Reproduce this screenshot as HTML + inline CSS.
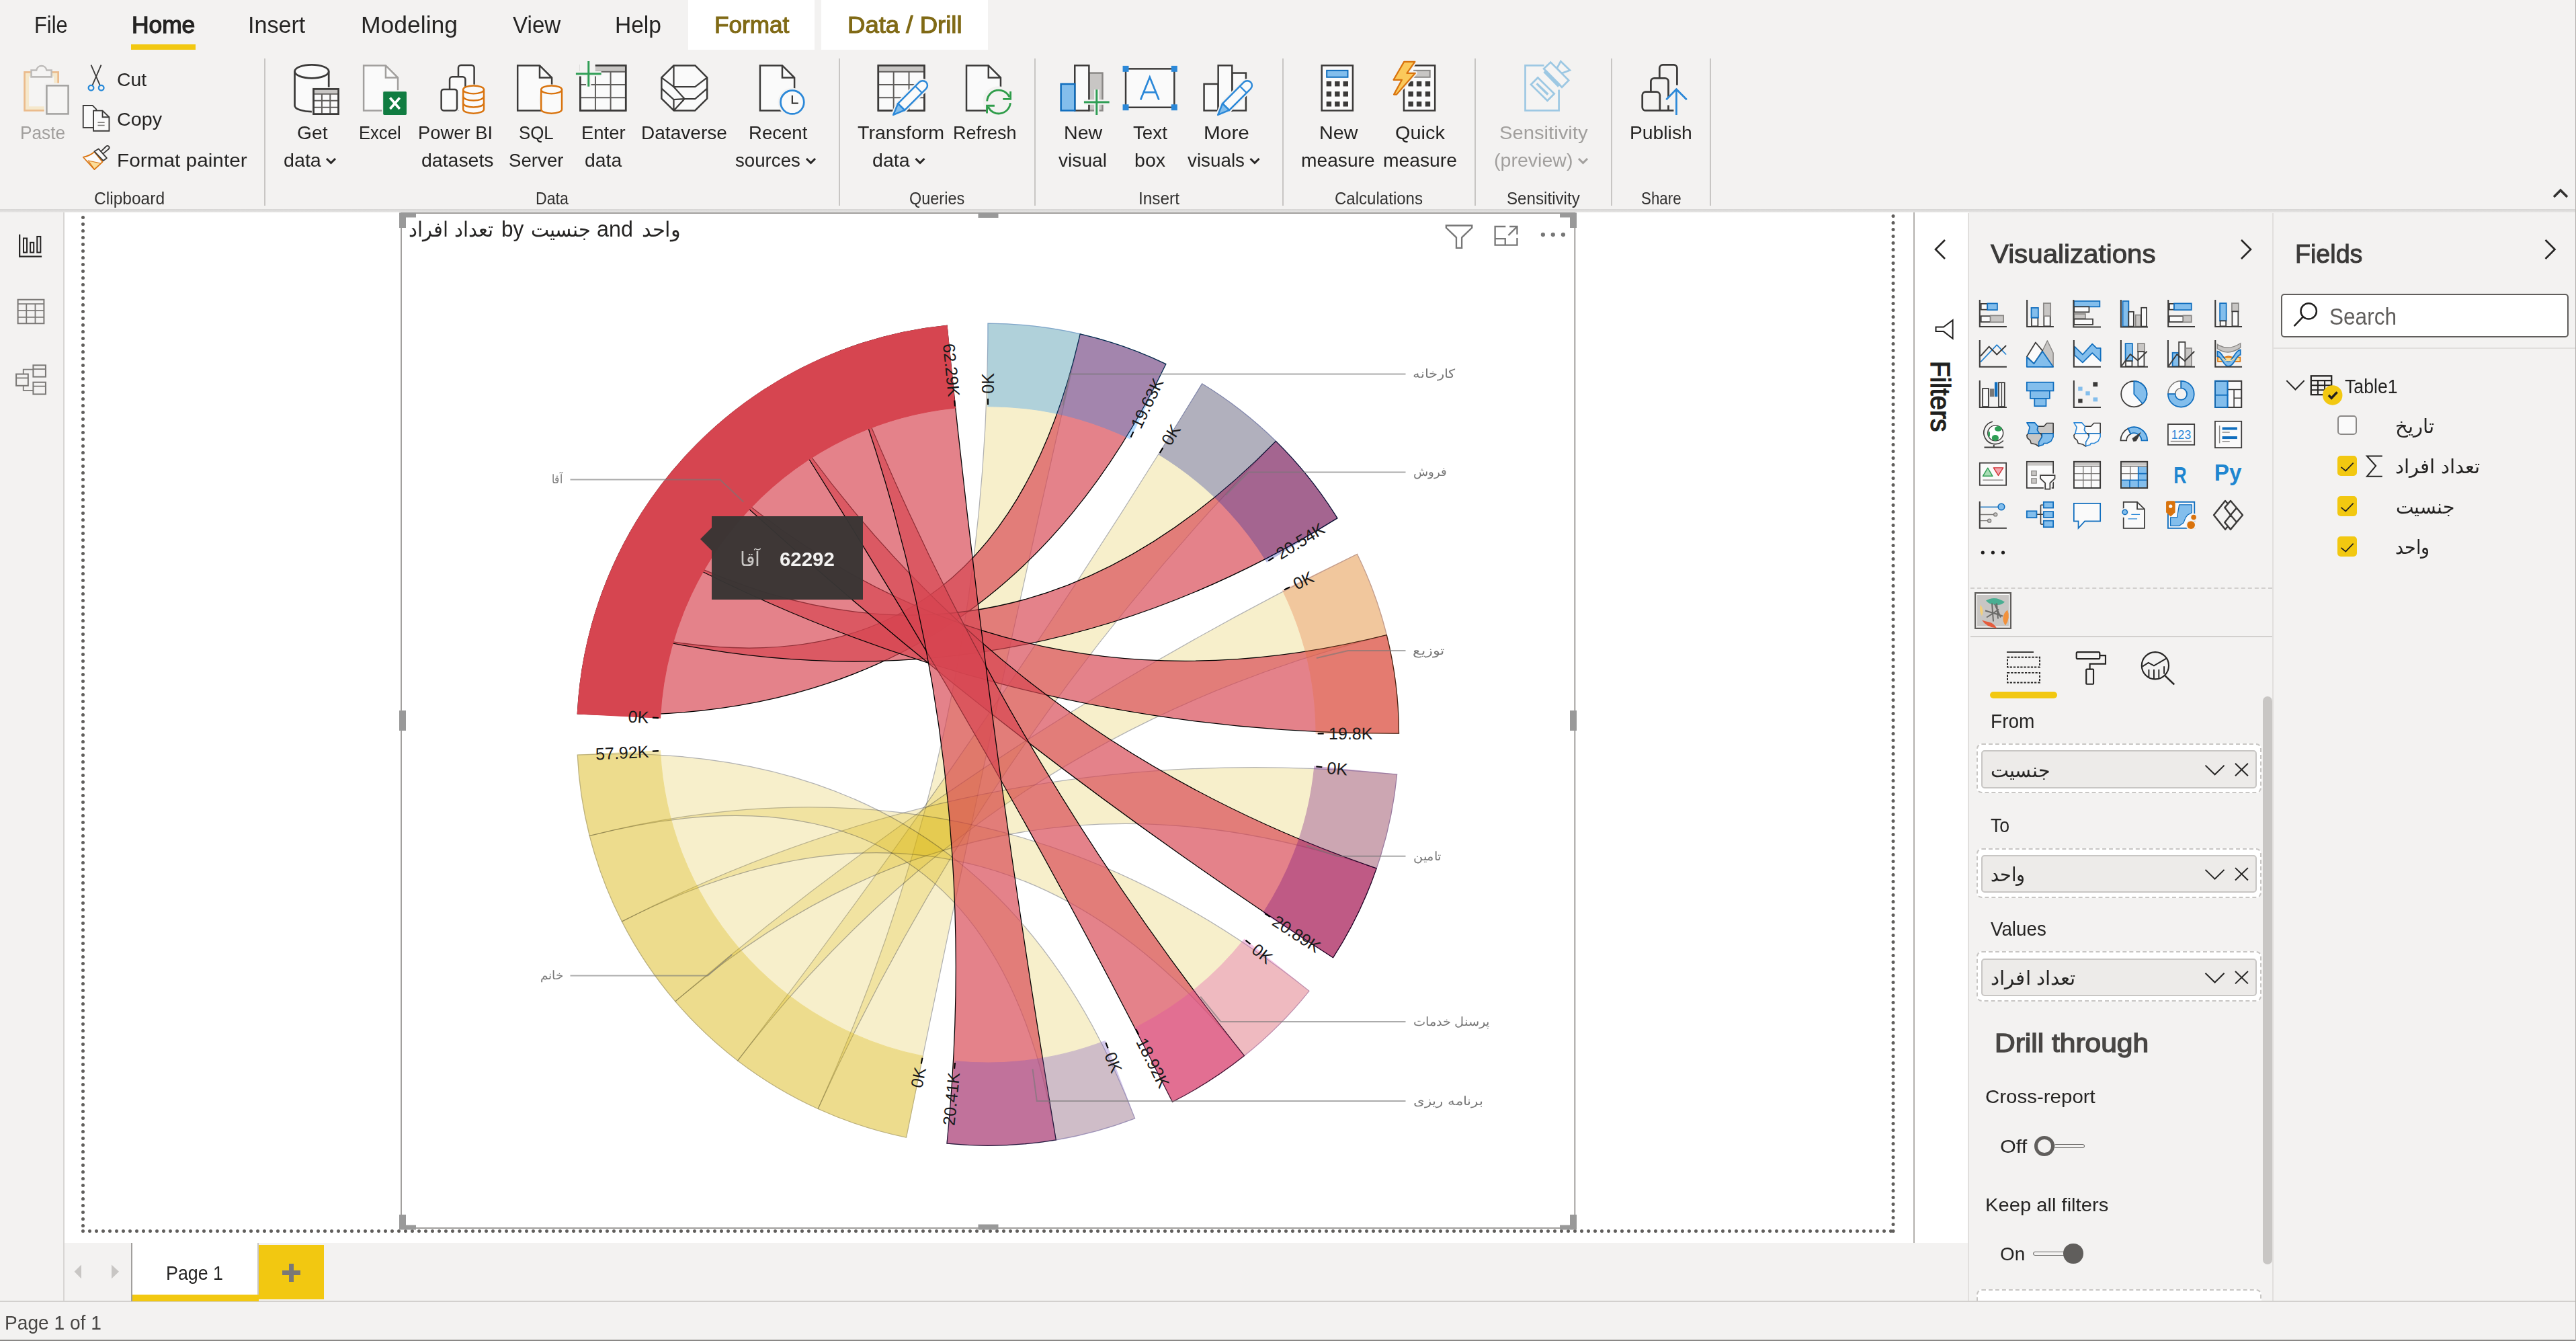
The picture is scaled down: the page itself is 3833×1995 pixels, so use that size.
<!DOCTYPE html>
<html><head><meta charset="utf-8"><title>Power BI</title><style>
html,body{margin:0;padding:0;}
body{width:3833px;height:1995px;overflow:hidden;background:#F3F2F1;font-family:"Liberation Sans",sans-serif;position:relative;}
.b{position:absolute;}
.t{position:absolute;white-space:nowrap;transform-origin:0 0;}
svg.main{position:absolute;left:0;top:0;}
.ch text{font-family:"Liberation Sans",sans-serif;font-size:25px;fill:#1a1a1a;}
.ch text.sl{font-size:20px;fill:#777;}
</style></head><body>
<div class="b" style="left:96.0px;top:311.0px;width:2751.0px;height:1538.0px;background:#fff;"></div>
<div class="b" style="left:2849.0px;top:311.0px;width:80.0px;height:1538.0px;background:#fff;"></div>
<div class="b" style="left:94.0px;top:316.0px;width:2.0px;height:1620.0px;background:#D8D6D4;"></div>
<div class="b" style="left:2846.5px;top:316.0px;width:2.0px;height:1533.0px;background:#B3B0AD;"></div>
<div class="b" style="left:0.0px;top:310.6px;width:3833.0px;height:5.6px;background:linear-gradient(#D6D5D4,#E3E2E1 85%,rgba(235,235,235,.6));"></div>
<div class="b" style="left:1024.0px;top:0.0px;width:188.0px;height:73.8px;background:#fff;"></div>
<div class="b" style="left:1221.9px;top:0.0px;width:248.1px;height:73.8px;background:#fff;"></div>
<div class="b" style="left:195.0px;top:66.0px;width:96.0px;height:8.0px;background:#F2C811;"></div>
<div class="b" style="left:392.8px;top:86.5px;width:2.0px;height:219.0px;background:#C8C6C4;"></div>
<div class="b" style="left:1248.0px;top:86.5px;width:2.0px;height:219.0px;background:#C8C6C4;"></div>
<div class="b" style="left:1538.9px;top:86.5px;width:2.0px;height:219.0px;background:#C8C6C4;"></div>
<div class="b" style="left:1907.8px;top:86.5px;width:2.0px;height:219.0px;background:#C8C6C4;"></div>
<div class="b" style="left:2193.8px;top:86.5px;width:2.0px;height:219.0px;background:#C8C6C4;"></div>
<div class="b" style="left:2397.0px;top:86.5px;width:2.0px;height:219.0px;background:#C8C6C4;"></div>
<div class="b" style="left:2544.0px;top:86.5px;width:2.0px;height:219.0px;background:#C8C6C4;"></div>
<div class="b" style="left:2928.0px;top:317.0px;width:1.5px;height:1619.0px;background:#E1DFDD;"></div>
<div class="b" style="left:3381.0px;top:317.0px;width:1.5px;height:1619.0px;background:#E1DFDD;"></div>
<div class="b" style="left:0.0px;top:1935.3px;width:3833.0px;height:1.5px;background:#D2D0CE;"></div>
<div class="b" style="left:0.0px;top:1993.0px;width:3833.0px;height:2.0px;background:#8A8886;"></div>
<div class="b" style="left:3831.5px;top:0.0px;width:1.5px;height:1995.0px;background:#B3B0AD;"></div>
<div class="b" style="left:195.0px;top:1849.0px;width:189.6px;height:87.0px;background:#fff;border-left:2px solid #A19F9D;border-right:2px solid #C8C6C4;box-sizing:border-box;"></div>
<div class="b" style="left:196.5px;top:1925.8px;width:188.0px;height:10.0px;background:#F2C811;"></div>
<div class="b" style="left:385.0px;top:1852.0px;width:97.0px;height:81.0px;background:#F2C811;"></div>
<div class="b" style="left:420.0px;top:1889.8px;width:27.0px;height:7.5px;background:#7A7876;"></div>
<div class="b" style="left:429.8px;top:1880.0px;width:7.5px;height:27.0px;background:#7A7876;"></div>
<div class="b" style="left:3393.7px;top:437.3px;width:428.6px;height:64.6px;background:#fff;border:2px solid #605E5C;border-radius:5px;box-sizing:border-box;"></div>
<div class="b" style="left:3382.5px;top:517.0px;width:449.0px;height:2.0px;background:#E1DFDD;"></div>
<div class="b" style="left:2932px;top:873.6px;width:449px;height:0;border-top:2px dashed #D2D0CE;"></div>
<div class="b" style="left:2932.0px;top:945.6px;width:449.0px;height:2.0px;background:#D2D0CE;"></div>
<div class="b" style="left:2961.0px;top:1029.2px;width:100.0px;height:9.8px;background:#F2C811;border-radius:5px;"></div>
<div class="b" style="left:3366.5px;top:1035.7px;width:14.0px;height:845.0px;background:#C8C6C4;border-radius:7px;"></div>
<div class="b" style="left:2941px;top:1106.2px;width:424.4px;height:74.2px;background:#fff;border:2px dashed #C8C6C4;border-radius:8px;box-sizing:border-box;"></div>
<div class="b" style="left:2948px;top:1116.4px;width:409.8px;height:56.2px;background:#EDEBE9;border:2px solid #C8C6C4;border-radius:5px;box-sizing:border-box;"></div>
<div class="b" style="left:2941px;top:1261.5px;width:424.4px;height:74.2px;background:#fff;border:2px dashed #C8C6C4;border-radius:8px;box-sizing:border-box;"></div>
<div class="b" style="left:2948px;top:1271.7px;width:409.8px;height:56.2px;background:#EDEBE9;border:2px solid #C8C6C4;border-radius:5px;box-sizing:border-box;"></div>
<div class="b" style="left:2941px;top:1415.4px;width:424.4px;height:74.2px;background:#fff;border:2px dashed #C8C6C4;border-radius:8px;box-sizing:border-box;"></div>
<div class="b" style="left:2948px;top:1425.6px;width:409.8px;height:56.2px;background:#EDEBE9;border:2px solid #C8C6C4;border-radius:5px;box-sizing:border-box;"></div>
<div class="b" style="left:2941px;top:1918.4px;width:424.4px;height:17px;overflow:hidden;"><div style="width:424.4px;height:60px;background:#fff;border:2px dashed #C8C6C4;border-radius:8px;box-sizing:border-box;"></div></div>
<div class="b" style="left:2938.4px;top:881.0px;width:54.5px;height:54.8px;background:#C8C6C4;border:2.5px solid #605E5C;box-sizing:border-box;outline:1px solid #fff;outline-offset:-4px;"></div>
<div class="b" style="left:3478.4px;top:618.4px;width:29.1px;height:29.1px;background:#FAFAFA;border:2px solid #8A8886;border-radius:5px;box-sizing:border-box;"></div>
<div class="b" style="left:3478.4px;top:678.0px;width:29.1px;height:29.6px;background:#F2C811;border-radius:5px;"></div>
<div class="b" style="left:3478.4px;top:738.0px;width:29.1px;height:29.6px;background:#F2C811;border-radius:5px;"></div>
<div class="b" style="left:3478.4px;top:798.0px;width:29.1px;height:29.6px;background:#F2C811;border-radius:5px;"></div>
<div class="b" style="left:3056.0px;top:1702.3px;width:46.0px;height:5.4px;background:#F3F2F1;border:1.5px solid #605E5C;border-radius:3px;box-sizing:border-box;"></div>
<div class="b" style="left:3027px;top:1690.2px;width:29.6px;height:29.6px;border:5px solid #605E5C;border-radius:50%;box-sizing:border-box;"></div>
<div class="b" style="left:3025.3px;top:1862.3px;width:50.0px;height:5.4px;background:#F3F2F1;border:1.5px solid #605E5C;border-radius:3px;box-sizing:border-box;"></div>
<div class="b" style="left:3070.3px;top:1850.3px;width:29.4px;height:29.4px;background:#605E5C;border-radius:50%;"></div>
<svg class="main" width="3833" height="1995" viewBox="0 0 3833 1995">
<g fill="none" stroke="#605E5C" stroke-width="5" stroke-linecap="round" stroke-dasharray="0 10">
<path d="M123.5,323.6 V1831.4"/><path d="M123.5,1831.4 H2817"/><path d="M2817,1831.4 V317"/>
</g>
<rect x="597" y="317" width="1746.3" height="1510" fill="none" stroke="#A19F9D" stroke-width="2"/>
<g class="ch">
<path d="M1470.0,481.2 A611.5,611.5 0 0 1 1607.2,496.8 Q1470.0,1092.8 1348.5,1692.1 A611.5,611.5 0 0 1 1217.2,1649.5 Q1470.0,1092.8 1470.0,481.2Z" fill="#D9B300" fill-opacity=".67" stroke="#000" stroke-width="1.25" opacity=".3"/>
<path d="M1607.2,496.8 A611.5,611.5 0 0 1 1734.9,541.6 Q1470.0,1092.8 859.3,1062.0 A611.5,611.5 0 0 1 881.0,928.5 Q1470.0,1092.8 1607.2,496.8Z" fill="#D64550" fill-opacity=".67" stroke="#000" stroke-width="1.25"/>
<path d="M1788.6,570.8 A611.5,611.5 0 0 1 1898.4,656.4 Q1470.0,1092.8 1217.2,1649.5 A611.5,611.5 0 0 1 1097.7,1577.9 Q1470.0,1092.8 1788.6,570.8Z" fill="#D9B300" fill-opacity=".67" stroke="#000" stroke-width="1.25" opacity=".3"/>
<path d="M1898.4,656.4 A611.5,611.5 0 0 1 1989.9,770.9 Q1470.0,1092.8 881.0,928.5 A611.5,611.5 0 0 1 937.0,793.1 Q1470.0,1092.8 1898.4,656.4Z" fill="#D64550" fill-opacity=".67" stroke="#000" stroke-width="1.25"/>
<path d="M2019.5,824.4 A611.5,611.5 0 0 1 2063.3,944.6 Q1470.0,1092.8 1097.7,1577.9 A611.5,611.5 0 0 1 1004.9,1489.8 Q1470.0,1092.8 2019.5,824.4Z" fill="#D9B300" fill-opacity=".67" stroke="#000" stroke-width="1.25" opacity=".3"/>
<path d="M2063.3,944.6 A611.5,611.5 0 0 1 2081.5,1091.1 Q1470.0,1092.8 937.0,793.1 A611.5,611.5 0 0 1 1024.3,674.1 Q1470.0,1092.8 2063.3,944.6Z" fill="#D64550" fill-opacity=".67" stroke="#000" stroke-width="1.25"/>
<path d="M2078.6,1152.1 A611.5,611.5 0 0 1 2048.2,1291.9 Q1470.0,1092.8 1004.9,1489.8 A611.5,611.5 0 0 1 925.4,1370.9 Q1470.0,1092.8 2078.6,1152.1Z" fill="#D9B300" fill-opacity=".67" stroke="#000" stroke-width="1.25" opacity=".3"/>
<path d="M2048.2,1291.9 A611.5,611.5 0 0 1 1983.6,1424.7 Q1470.0,1092.8 1024.3,674.1 A611.5,611.5 0 0 1 1137.6,579.5 Q1470.0,1092.8 2048.2,1291.9Z" fill="#D64550" fill-opacity=".67" stroke="#000" stroke-width="1.25"/>
<path d="M1947.9,1474.3 A611.5,611.5 0 0 1 1851.5,1570.6 Q1470.0,1092.8 925.4,1370.9 A611.5,611.5 0 0 1 877.3,1243.4 Q1470.0,1092.8 1947.9,1474.3Z" fill="#D9B300" fill-opacity=".67" stroke="#000" stroke-width="1.25" opacity=".3"/>
<path d="M1851.5,1570.6 A611.5,611.5 0 0 1 1744.5,1639.2 Q1470.0,1092.8 1137.6,579.5 A611.5,611.5 0 0 1 1250.9,521.8 Q1470.0,1092.8 1851.5,1570.6Z" fill="#D64550" fill-opacity=".67" stroke="#000" stroke-width="1.25"/>
<path d="M1688.6,1663.9 A611.5,611.5 0 0 1 1571.3,1695.8 Q1470.0,1092.8 877.3,1243.4 A611.5,611.5 0 0 1 859.3,1123.1 Q1470.0,1092.8 1688.6,1663.9Z" fill="#D9B300" fill-opacity=".67" stroke="#000" stroke-width="1.25" opacity=".3"/>
<path d="M1571.3,1695.8 A611.5,611.5 0 0 1 1409.0,1701.2 Q1470.0,1092.8 1250.9,521.8 A611.5,611.5 0 0 1 1409.0,484.3 Q1470.0,1092.8 1571.3,1695.8Z" fill="#D64550" fill-opacity=".67" stroke="#000" stroke-width="1.25"/>
<path d="M1470.0,481.2 A611.5,611.5 0 0 1 1734.9,541.6 L1681.5,652.7 A488.2,488.2 0 0 0 1470.0,604.5Z" fill="#118DFF" stroke="#118DFF" stroke-width="1.25" opacity=".3"/>
<path d="M1788.6,570.8 A611.5,611.5 0 0 1 1989.9,770.9 L1885.1,835.8 A488.2,488.2 0 0 0 1724.3,676.0Z" fill="#12239E" stroke="#12239E" stroke-width="1.25" opacity=".3"/>
<path d="M2019.5,824.4 A611.5,611.5 0 0 1 2081.5,1091.1 L1958.2,1091.4 A488.2,488.2 0 0 0 1908.7,878.5Z" fill="#E66C37" stroke="#E66C37" stroke-width="1.25" opacity=".3"/>
<path d="M2078.6,1152.1 A611.5,611.5 0 0 1 1983.6,1424.7 L1880.0,1357.7 A488.2,488.2 0 0 0 1955.9,1140.2Z" fill="#6B007B" stroke="#6B007B" stroke-width="1.25" opacity=".3"/>
<path d="M1947.9,1474.3 A611.5,611.5 0 0 1 1744.5,1639.2 L1689.1,1529.0 A488.2,488.2 0 0 0 1851.5,1397.3Z" fill="#E044A7" stroke="#E044A7" stroke-width="1.25" opacity=".3"/>
<path d="M1688.6,1663.9 A611.5,611.5 0 0 1 1409.0,1701.2 L1421.3,1578.5 A488.2,488.2 0 0 0 1644.5,1548.7Z" fill="#744EC2" stroke="#744EC2" stroke-width="1.25" opacity=".3"/>
<path d="M1348.5,1692.1 A611.5,611.5 0 0 1 859.3,1123.1 L982.4,1117.0 A488.2,488.2 0 0 0 1373.0,1571.2Z" fill="#D9B300" stroke="#D9B300" stroke-width="1.25" opacity=".3"/>
<path d="M859.3,1062.0 A611.5,611.5 0 0 1 1409.0,484.3 L1421.3,607.0 A488.2,488.2 0 0 0 982.4,1068.2Z" fill="#D64550" stroke="#D64550" stroke-width="1.25"/>
<g transform="translate(1470.0,1092.75) rotate(-90.00) translate(488.2,0)">
<line x1="2.5" x2="11.5" stroke="#000" stroke-width="2.1"/>
<text x="18.9" dy=".35em">0K</text>
</g>
<g transform="translate(1470.0,1092.75) rotate(-64.33) translate(488.2,0)">
<line x1="2.5" x2="11.5" stroke="#000" stroke-width="2.1"/>
<text x="18.9" dy=".35em">19.63K</text>
</g>
<g transform="translate(1470.0,1092.75) rotate(-58.60) translate(488.2,0)">
<line x1="2.5" x2="11.5" stroke="#000" stroke-width="2.1"/>
<text x="18.9" dy=".35em">0K</text>
</g>
<g transform="translate(1470.0,1092.75) rotate(-31.76) translate(488.2,0)">
<line x1="2.5" x2="11.5" stroke="#000" stroke-width="2.1"/>
<text x="18.9" dy=".35em">20.54K</text>
</g>
<g transform="translate(1470.0,1092.75) rotate(-26.03) translate(488.2,0)">
<line x1="2.5" x2="11.5" stroke="#000" stroke-width="2.1"/>
<text x="18.9" dy=".35em">0K</text>
</g>
<g transform="translate(1470.0,1092.75) rotate(-0.16) translate(488.2,0)">
<line x1="2.5" x2="11.5" stroke="#000" stroke-width="2.1"/>
<text x="18.9" dy=".35em">19.8K</text>
</g>
<g transform="translate(1470.0,1092.75) rotate(5.57) translate(488.2,0)">
<line x1="2.5" x2="11.5" stroke="#000" stroke-width="2.1"/>
<text x="18.9" dy=".35em">0K</text>
</g>
<g transform="translate(1470.0,1092.75) rotate(32.87) translate(488.2,0)">
<line x1="2.5" x2="11.5" stroke="#000" stroke-width="2.1"/>
<text x="18.9" dy=".35em">20.89K</text>
</g>
<g transform="translate(1470.0,1092.75) rotate(38.60) translate(488.2,0)">
<line x1="2.5" x2="11.5" stroke="#000" stroke-width="2.1"/>
<text x="18.9" dy=".35em">0K</text>
</g>
<g transform="translate(1470.0,1092.75) rotate(63.33) translate(488.2,0)">
<line x1="2.5" x2="11.5" stroke="#000" stroke-width="2.1"/>
<text x="18.9" dy=".35em">18.92K</text>
</g>
<g transform="translate(1470.0,1092.75) rotate(69.06) translate(488.2,0)">
<line x1="2.5" x2="11.5" stroke="#000" stroke-width="2.1"/>
<text x="18.9" dy=".35em">0K</text>
</g>
<g transform="translate(1470.0,1092.75) rotate(95.73) translate(488.2,0)">
<line x1="2.5" x2="11.5" stroke="#000" stroke-width="2.1"/>
<text transform="rotate(180) translate(-34.2,0)" x="17.1" dy=".35em" text-anchor="end">20.41K</text>
</g>
<g transform="translate(1470.0,1092.75) rotate(101.46) translate(488.2,0)">
<line x1="2.5" x2="11.5" stroke="#000" stroke-width="2.1"/>
<text transform="rotate(180) translate(-34.2,0)" x="17.1" dy=".35em" text-anchor="end">0K</text>
</g>
<g transform="translate(1470.0,1092.75) rotate(177.15) translate(488.2,0)">
<line x1="2.5" x2="11.5" stroke="#000" stroke-width="2.1"/>
<text transform="rotate(180) translate(-34.2,0)" x="17.1" dy=".35em" text-anchor="end">57.92K</text>
</g>
<g transform="translate(1470.0,1092.75) rotate(182.88) translate(488.2,0)">
<line x1="2.5" x2="11.5" stroke="#000" stroke-width="2.1"/>
<text transform="rotate(180) translate(-34.2,0)" x="17.1" dy=".35em" text-anchor="end">0K</text>
</g>
<g transform="translate(1470.0,1092.75) rotate(264.27) translate(488.2,0)">
<line x1="2.5" x2="11.5" stroke="#000" stroke-width="2.1"/>
<text transform="rotate(180) translate(-34.2,0)" x="17.1" dy=".35em" text-anchor="end">62.29K</text>
</g>
<polyline points="1581.5,603.3 1592.2,556.5 2091.5,556.5" fill="none" stroke="#777" stroke-opacity=".62" stroke-width="2"/>
<polyline points="1823.8,736.7 1857.7,702.6 2091.5,702.6" fill="none" stroke="#777" stroke-opacity=".62" stroke-width="2"/>
<polyline points="1958.9,979.0 2005.7,968.1 2091.5,968.1" fill="none" stroke="#777" stroke-opacity=".62" stroke-width="2"/>
<polyline points="1944.0,1258.0 1989.3,1273.8 2091.5,1273.8" fill="none" stroke="#777" stroke-opacity=".62" stroke-width="2"/>
<polyline points="1786.2,1482.7 1816.4,1520.0 2091.5,1520.0" fill="none" stroke="#777" stroke-opacity=".62" stroke-width="2"/>
<polyline points="1536.5,1590.3 1542.8,1637.9 2091.5,1637.9" fill="none" stroke="#777" stroke-opacity=".62" stroke-width="2"/>
<polyline points="1089.4,1420.1 1053.0,1451.4 848.5,1451.4" fill="none" stroke="#777" stroke-opacity=".62" stroke-width="2"/>
<polyline points="1106.3,746.7 1071.5,713.6 848.5,713.6" fill="none" stroke="#777" stroke-opacity=".62" stroke-width="2"/>
</g>
<g fill="#999">
<path d="M594,316.5 h25 v7 h-15 v15.5 h-10z"/>
<path d="M2346,316.5 h-25 v7 h15 v15.5 h10z"/>
<path d="M594,1829.5 h25 v-7 h-15 v-15.5 h-10z"/>
<path d="M2346,1829.5 h-25 v-7 h15 v-15.5 h10z"/>
<rect x="1455.5" y="316.5" width="30" height="7.5"/><rect x="1455.5" y="1821.5" width="30" height="8"/>
<rect x="594" y="1057" width="10" height="30"/><rect x="2336" y="1057" width="10" height="30"/>
</g>
<g transform="translate(0,0) scale(0.248447)"><path d="M1765,428 V632 A102,36 0 0 0 1969,632 V428Z" fill="#FAFAFA"/><ellipse cx="1867" cy="428" rx="102" ry="40" fill="#FAFAFA" stroke="#3B3A39" stroke-width="11"/><path d="M1765,428 V632 A102,36 0 0 0 1880,668" fill="none" stroke="#3B3A39" stroke-width="11"/><path d="M1969,428 V530" fill="none" stroke="#3B3A39" stroke-width="11"/><rect x="1867" y="522" width="171" height="172" fill="#F3F2F1"/><rect x="1878" y="533" width="149" height="150" fill="#FAFAFA" stroke="#3B3A39" stroke-width="10"/><rect x="1883" y="538" width="139" height="25" fill="#C8C6C4"/><path d="M1927.67,563 V683 M1977.33,563 V683 M1878,563 H2027 M1878,603 H2027 M1878,643 H2027 " fill="none" stroke="#605E5C" stroke-width="8"/><rect x="1878" y="533" width="149" height="150" fill="none" stroke="#3B3A39" stroke-width="10"/><path d="M2178,392 H2310 L2383,465 V662 H2178Z" fill="#FAFAFA" stroke="#A19F9D" stroke-width="10"/><path d="M2310,392 V465 H2383" fill="none" stroke="#A19F9D" stroke-width="10"/><rect x="2287" y="540" width="156" height="156" fill="#F3F2F1"/><rect x="2295" y="548" width="140" height="140" fill="#107C41" rx="6"/><path d="M2336,586 L2394,652 M2394,586 L2336,652" fill="none" stroke="#fff" stroke-width="15"/></g><g transform="translate(600,0) scale(0.248447)"><path d="M330,662 V406 a16,16 0 0 1 16,-16 H409 a16,16 0 0 1 16,16 V662" fill="#FAFAFA" stroke="#3B3A39" stroke-width="10"/><path d="M278,662 V476 a16,16 0 0 1 16,-16 H356 a16,16 0 0 1 16,16 V662" fill="#FAFAFA" stroke="#3B3A39" stroke-width="10"/><rect x="228" y="535" width="94" height="127" fill="#FAFAFA" stroke="#3B3A39" stroke-width="10" rx="14"/><ellipse cx="421" cy="600" rx="76" ry="95" fill="#F3F2F1"/><path d="M359,537 V655 A62,24 0 0 0 483,655 V537Z" fill="#FAFAFA" stroke="#D9730D" stroke-width="10"/><ellipse cx="421" cy="537" rx="62" ry="24" fill="#FAFAFA" stroke="#D9730D" stroke-width="10"/><path d="M359,578 A62,24 0 0 0 483,578" fill="none" stroke="#D9730D" stroke-width="10"/><path d="M359,618 A62,24 0 0 0 483,618" fill="none" stroke="#D9730D" stroke-width="10"/><path d="M685,392 H817 L890,465 V662 H685Z" fill="#FAFAFA" stroke="#3B3A39" stroke-width="10"/><path d="M817,392 V465 H890" fill="none" stroke="#3B3A39" stroke-width="10"/><ellipse cx="888" cy="600" rx="76" ry="95" fill="#F3F2F1"/><path d="M826,537 V655 A62,24 0 0 0 950,655 V537Z" fill="#FAFAFA" stroke="#D9730D" stroke-width="10"/><ellipse cx="888" cy="537" rx="62" ry="24" fill="#FAFAFA" stroke="#D9730D" stroke-width="10"/><rect x="1060" y="392" width="273" height="270" fill="#FAFAFA" stroke="#3B3A39" stroke-width="10"/><rect x="1065" y="397" width="263" height="33" fill="#C8C6C4"/><path d="M1151,430 V662 M1242,430 V662 M1060,430 H1333 M1060,507.333 H1333 M1060,584.667 H1333 " fill="none" stroke="#605E5C" stroke-width="8"/><rect x="1060" y="392" width="273" height="270" fill="none" stroke="#3B3A39" stroke-width="10"/><rect x="1055" y="385" width="95" height="47" fill="#F3F2F1"/><path d="M1034,442 H1186 M1110,366 V518" fill="none" stroke="#F3F2F1" stroke-width="30"/><path d="M1034,442 H1186 M1110,366 V518" fill="none" stroke="#2F9E55" stroke-width="12"/><path d="M1620,392 H1748 L1820,464 V590 L1748,662 H1620 L1547,590 V464Z" fill="#FAFAFA" stroke="#3B3A39" stroke-width="10" stroke-linejoin="round"/><path d="M1620,392 V520 H1748 L1820,464 M1547,464 L1620,520 M1620,520 L1685,592 H1748 L1820,530 M1547,530 L1620,596 L1685,592 M1620,596 V662 M1685,592 L1620,662" fill="none" stroke="#3B3A39" stroke-width="9"/><path d="M2137,392 H2270 L2343,465 V662 H2137Z" fill="#FAFAFA" stroke="#3B3A39" stroke-width="10"/><path d="M2270,392 V465 H2343" fill="none" stroke="#3B3A39" stroke-width="10"/><circle cx="2330" cy="612" r="86" fill="#F3F2F1"/><circle cx="2330" cy="612" r="70" fill="#FAFAFA" stroke="#2B88D8" stroke-width="11"/><path d="M2330,572 V618 H2366" fill="none" stroke="#3B3A39" stroke-width="9"/></g><g transform="translate(1200,0) scale(0.248447)"><rect x="430" y="392" width="276" height="270" fill="#FAFAFA" stroke="#3B3A39" stroke-width="10"/><rect x="435" y="397" width="266" height="33" fill="#C8C6C4"/><path d="M522,430 V662 M614,430 V662 M430,430 H706 M430,507.333 H706 M430,584.667 H706 " fill="none" stroke="#605E5C" stroke-width="8"/><rect x="430" y="392" width="276" height="270" fill="none" stroke="#3B3A39" stroke-width="10"/><g transform="translate(0,0)"><path d="M520,688 L548,620 L676,492 A28,28 0 0 1 716,532 L588,660 Z" fill="#F3F2F1" stroke="#F3F2F1" stroke-width="26" stroke-linejoin="round"/><path d="M548,620 L676,492 A28,28 0 0 1 716,532 L588,660 Z" fill="#FAFAFA" stroke="#2B88D8" stroke-width="10"/><path d="M548,620 L588,660 L520,688 Z" fill="#83BEEC" stroke="#2B88D8" stroke-width="10" stroke-linejoin="round"/><path d="M652,516 L692,556" fill="none" stroke="#2B88D8" stroke-width="9"/></g><path d="M958,392 H1090 L1163,465 V662 H958Z" fill="#FAFAFA" stroke="#3B3A39" stroke-width="10"/><path d="M1090,392 V465 H1163" fill="none" stroke="#3B3A39" stroke-width="10"/><circle cx="1147" cy="606" r="90" fill="#F3F2F1"/><rect x="1692" y="437" width="81" height="225" fill="#C8C6C4" stroke="#8A8886" stroke-width="10"/><rect x="1607" y="392" width="85" height="270" fill="#FAFAFA" stroke="#3B3A39" stroke-width="10"/><rect x="1524" y="503" width="83" height="159" fill="#83BEEC" stroke="#106EBE" stroke-width="10"/><path d="M1662,612 H1814 M1738,536 V688" fill="none" stroke="#F3F2F1" stroke-width="30"/><path d="M1662,612 H1814 M1738,536 V688" fill="none" stroke="#2F9E55" stroke-width="12"/><rect x="1912" y="412" width="291" height="231" fill="#FAFAFA" stroke="#3B3A39" stroke-width="10"/><rect x="1894" y="394" width="36" height="36" fill="#2B88D8"/><rect x="2185" y="394" width="36" height="36" fill="#2B88D8"/><rect x="1894" y="625" width="36" height="36" fill="#2B88D8"/><rect x="2185" y="625" width="36" height="36" fill="#2B88D8"/><path d="M2001,598 L2056,462 L2111,598 M2019,553 H2093" fill="none" stroke="#2B88D8" stroke-width="11"/></g><g transform="translate(1760,0) scale(0.248447)"><rect x="295" y="437" width="83" height="225" fill="#FAFAFA" stroke="#3B3A39" stroke-width="10"/><rect x="127" y="503" width="85" height="159" fill="#FAFAFA" stroke="#3B3A39" stroke-width="10"/><rect x="212" y="392" width="83" height="270" fill="#FAFAFA" stroke="#3B3A39" stroke-width="10"/><g transform="translate(-310,0)"><path d="M520,688 L548,620 L676,492 A28,28 0 0 1 716,532 L588,660 Z" fill="#F3F2F1" stroke="#F3F2F1" stroke-width="26" stroke-linejoin="round"/><path d="M548,620 L676,492 A28,28 0 0 1 716,532 L588,660 Z" fill="#FAFAFA" stroke="#2B88D8" stroke-width="10"/><path d="M548,620 L588,660 L520,688 Z" fill="#83BEEC" stroke="#2B88D8" stroke-width="10" stroke-linejoin="round"/><path d="M652,516 L692,556" fill="none" stroke="#2B88D8" stroke-width="9"/></g><rect x="832" y="392" width="186" height="270" fill="#FAFAFA" stroke="#3B3A39" stroke-width="10"/><rect x="862" y="422" width="126" height="40" fill="#83BEEC" stroke="#106EBE" stroke-width="8"/><rect x="860" y="487" width="30" height="30" fill="#3B3A39"/><rect x="860" y="548" width="30" height="30" fill="#3B3A39"/><rect x="860" y="608" width="30" height="30" fill="#3B3A39"/><rect x="910" y="487" width="30" height="30" fill="#3B3A39"/><rect x="910" y="548" width="30" height="30" fill="#3B3A39"/><rect x="910" y="608" width="30" height="30" fill="#3B3A39"/><rect x="960" y="487" width="30" height="30" fill="#3B3A39"/><rect x="960" y="548" width="30" height="30" fill="#3B3A39"/><rect x="960" y="608" width="30" height="30" fill="#3B3A39"/><rect x="1324" y="392" width="186" height="270" fill="#FAFAFA" stroke="#3B3A39" stroke-width="10"/><rect x="1385" y="422" width="95" height="40" fill="#C8C6C4" stroke="#8A8886" stroke-width="8"/><rect x="1350" y="487" width="30" height="30" fill="#3B3A39"/><rect x="1350" y="548" width="30" height="30" fill="#3B3A39"/><rect x="1350" y="608" width="30" height="30" fill="#3B3A39"/><rect x="1400" y="487" width="30" height="30" fill="#3B3A39"/><rect x="1400" y="548" width="30" height="30" fill="#3B3A39"/><rect x="1400" y="608" width="30" height="30" fill="#3B3A39"/><rect x="1452" y="487" width="30" height="30" fill="#3B3A39"/><rect x="1452" y="548" width="30" height="30" fill="#3B3A39"/><rect x="1452" y="608" width="30" height="30" fill="#3B3A39"/><path d="M1325,370 H1390 L1342,438 H1392 L1280,566 H1264 L1312,478 H1262Z" fill="#F3F2F1" stroke="#F3F2F1" stroke-width="24" stroke-linejoin="round"/><path d="M1325,370 H1390 L1342,438 H1392 L1280,566 H1264 L1312,478 H1262Z" fill="#FBC95B" stroke="#D9730D" stroke-width="9" stroke-linejoin="round"/></g><g transform="translate(2360,0) scale(0.248447)"><path d="M440,468 V408 a20,20 0 0 1 20,-20 h65 a20,20 0 0 1 20,20 V510" fill="none" stroke="#3B3A39" stroke-width="11"/><path d="M388,550 V488 a20,20 0 0 1 20,-20 h65 a20,20 0 0 1 20,20 V585 M493,630 V662" fill="none" stroke="#3B3A39" stroke-width="11"/><path d="M442,662 V570 a20,20 0 0 0 -20,-20 h-65 a20,20 0 0 0 -20,20 v72 a20,20 0 0 0 20,20 H525" fill="none" stroke="#3B3A39" stroke-width="11"/><path d="M541,688 V534 M480,597 L541,534 L603,597" fill="none" stroke="#2B88D8" stroke-width="11"/></g><g transform="translate(1425,85) scale(0.0708215)"><path d="M617,925 A245,245 0 0 1 1085,838" fill="none" stroke="#2E9C49" stroke-width="40"/><path d="M1110,720 V880 H950" fill="none" stroke="#2E9C49" stroke-width="40"/><path d="M1107,962 A245,245 0 0 1 640,1042" fill="none" stroke="#2E9C49" stroke-width="40"/><path d="M775,1020 H615 V1180" fill="none" stroke="#2E9C49" stroke-width="40"/></g><g transform="translate(2255,85) scale(0.0708215)"><path d="M600,175 H205 V1122 H912 V685" fill="#F5F4F3" stroke="#9DC8E3" stroke-width="38"/><path d="M470,430 L815,770 L670,915 L325,575Z" fill="#F5F4F3" stroke="#9DC8E3" stroke-width="38"/><path d="M460,535 L700,765 L665,805 L430,572Z" fill="#9DC8E3"/><path d="M738,108 L1118,488 L975,632 L595,245Z" fill="#F3F2F1" stroke="#F3F2F1" stroke-width="70" stroke-linejoin="round"/><path d="M870,235 L950,88 L1143,275 L968,340Z" fill="#F5F4F3" stroke="#9DC8E3" stroke-width="38"/><path d="M738,108 L1118,488 L975,632 L595,245Z" fill="#F5F4F3" stroke="#9DC8E3" stroke-width="38"/><path d="M585,320 L640,262 L948,572 L890,632Z" fill="#9DC8E3"/></g><g transform="translate(20,85) scale(0.0708215)"><rect x="215" y="297" width="745" height="843" fill="#EBBB8C"/><rect x="253" y="335" width="669" height="767" fill="#F5E8CC"/><rect x="325" y="405" width="525" height="630" fill="#F5F4F3"/><path d="M375,415 V275 H482 A110,112 0 0 1 698,275 H800 V415Z" fill="#F5F4F3" stroke="#BDBBB9" stroke-width="36"/><rect x="645" y="545" width="560" height="700" fill="#F3F2F1"/><rect x="698" y="598" width="454" height="594" fill="#F5F4F3" stroke="#A3A2A0" stroke-width="36"/></g><g transform="translate(110,80) scale(0.141723)"><path d="M180,118 L275,335 M286,118 L192,335" fill="none" stroke="#3B3A39" stroke-width="13"/><circle cx="180" cy="358" r="27" fill="none" stroke="#2488D8" stroke-width="16"/><circle cx="287" cy="358" r="27" fill="none" stroke="#2488D8" stroke-width="16"/><path d="M97,543 H195 L235,583 V775 H97Z" fill="#FAFAFA" stroke="#3B3A39" stroke-width="13"/><path d="M205,597 H300 L370,665 V810 H205Z" fill="#FAFAFA" stroke="#3B3A39" stroke-width="13"/><path d="M300,597 V665 H370" fill="none" stroke="#3B3A39" stroke-width="13"/><path d="M250,722 H322 M250,752 H322" fill="none" stroke="#7A7876" stroke-width="11"/><path d="M97,1085 Q160,1075 215,1030 L300,1135 L215,1215Z" fill="#FAFAFA" stroke="#D9730D" stroke-width="12" stroke-linejoin="round"/><path d="M150,1122 L283,1150 L215,1212Z" fill="#FBDD9A" stroke="#D9730D" stroke-width="8" stroke-linejoin="round"/><path d="M215,1025 L258,998 L345,1095 L308,1122Z" fill="#FAFAFA" stroke="#3B3A39" stroke-width="13" stroke-linejoin="round"/><path d="M282,1028 L338,972 Q356,958 368,974 Q378,990 362,1002 L302,1052" fill="none" stroke="#3B3A39" stroke-width="13" stroke-linejoin="round"/></g><path d="M486,236 l6.5,6.5 l6.5,-6.5" fill="none" stroke="#252423" stroke-width="3"/><path d="M1200,236 l6.5,6.5 l6.5,-6.5" fill="none" stroke="#252423" stroke-width="3"/><path d="M1362.5,236 l6.5,6.5 l6.5,-6.5" fill="none" stroke="#252423" stroke-width="3"/><path d="M1860.5,236 l6.5,6.5 l6.5,-6.5" fill="none" stroke="#252423" stroke-width="3"/><path d="M2349,236 l6.5,6.5 l6.5,-6.5" fill="none" stroke="#A19F9D" stroke-width="3"/><path d="M3800,293 L3810,283 L3820,293" fill="none" stroke="#323130" stroke-width="3.5"/><g transform="translate(2945,446) scale(0.15916)"><rect x="17" y="37" width="60" height="55" fill="#FAFAFA" stroke="#3B3A39" stroke-width="11"/><rect x="77" y="34" width="92" height="61" fill="#83BEEC" stroke="#106EBE" stroke-width="11"/><rect x="17" y="152" width="88" height="55" fill="#FAFAFA" stroke="#3B3A39" stroke-width="11"/><rect x="105" y="147" width="122" height="62" fill="#C8C6C4" stroke="#8A8886" stroke-width="11"/><path d="M5,0 V251 H257" fill="none" stroke="#3B3A39" stroke-width="13"/></g><g transform="translate(3015.03,446) scale(0.15916)"><rect x="50" y="167" width="59" height="80" fill="#FAFAFA" stroke="#3B3A39" stroke-width="11"/><rect x="47" y="75" width="65" height="92" fill="#83BEEC" stroke="#106EBE" stroke-width="11"/><rect x="165" y="152" width="59" height="95" fill="#FAFAFA" stroke="#3B3A39" stroke-width="11"/><rect x="162" y="32" width="65" height="120" fill="#C8C6C4" stroke="#8A8886" stroke-width="11"/><path d="M7,0 V251 H257" fill="none" stroke="#3B3A39" stroke-width="13"/></g><g transform="translate(3085.06,446) scale(0.15916)"><rect x="7" y="12" width="240" height="53" fill="#83BEEC" stroke="#106EBE" stroke-width="11"/><rect x="7" y="65" width="140" height="50" fill="#FAFAFA" stroke="#3B3A39" stroke-width="11"/><rect x="7" y="132" width="105" height="45" fill="#C8C6C4" stroke="#8A8886" stroke-width="11"/><rect x="7" y="180" width="175" height="52" fill="#FAFAFA" stroke="#3B3A39" stroke-width="11"/><path d="M2,0 V255 H257" fill="none" stroke="#3B3A39" stroke-width="13"/></g><g transform="translate(3155.09,446) scale(0.15916)"><rect x="22" y="12" width="55" height="237" fill="#83BEEC" stroke="#106EBE" stroke-width="11"/><rect x="77" y="112" width="47" height="137" fill="#FAFAFA" stroke="#3B3A39" stroke-width="11"/><rect x="142" y="142" width="48" height="107" fill="#C8C6C4" stroke="#8A8886" stroke-width="11"/><rect x="195" y="74" width="50" height="175" fill="#FAFAFA" stroke="#3B3A39" stroke-width="11"/><path d="M5,0 V255 H257" fill="none" stroke="#3B3A39" stroke-width="13"/></g><g transform="translate(3225.12,446) scale(0.15916)"><rect x="17" y="37" width="45" height="55" fill="#FAFAFA" stroke="#3B3A39" stroke-width="11"/><rect x="62" y="34" width="162" height="61" fill="#83BEEC" stroke="#106EBE" stroke-width="11"/><rect x="17" y="152" width="130" height="55" fill="#FAFAFA" stroke="#3B3A39" stroke-width="11"/><rect x="147" y="147" width="77" height="62" fill="#C8C6C4" stroke="#8A8886" stroke-width="11"/><path d="M7,0 V251 H257" fill="none" stroke="#3B3A39" stroke-width="13"/></g><g transform="translate(3295.15,446) scale(0.15916)"><rect x="50" y="32" width="60" height="165" fill="#83BEEC" stroke="#106EBE" stroke-width="11"/><rect x="53" y="197" width="54" height="50" fill="#FAFAFA" stroke="#3B3A39" stroke-width="11"/><rect x="162" y="32" width="62" height="77" fill="#C8C6C4" stroke="#8A8886" stroke-width="11"/><rect x="165" y="109" width="56" height="138" fill="#FAFAFA" stroke="#3B3A39" stroke-width="11"/><path d="M7,0 V251 H257" fill="none" stroke="#3B3A39" stroke-width="13"/></g><g transform="translate(2945,506) scale(0.15916)"><path d="M12,205 L165,45 L252,135" fill="none" stroke="#1F7FCF" stroke-width="10" stroke-linejoin="round"/><path d="M12,150 L92,60 L165,135 L252,50" fill="none" stroke="#3B3A39" stroke-width="12" stroke-linejoin="round"/><path d="M5,0 V250 H257" fill="none" stroke="#3B3A39" stroke-width="13"/></g><g transform="translate(3015.03,506) scale(0.15916)"><path d="M152,100 L197,5 L252,120 L252,250 L152,250Z" fill="#C8C6C4" stroke="#8A8886" stroke-width="9" stroke-linejoin="round"/><path d="M5,155 L87,22 L152,100 L72,220Z" fill="#FAFAFA" stroke="#3B3A39" stroke-width="11" stroke-linejoin="round"/><path d="M5,160 L72,220 L152,105 L252,250 L5,250Z" fill="#83BEEC" stroke="#106EBE" stroke-width="11" stroke-linejoin="round"/></g><g transform="translate(3085.06,506) scale(0.15916)"><path d="M12,140 L87,210 L177,120 L255,195 L255,245 L12,245Z" fill="#FAFAFA" stroke-linejoin="round"/><path d="M12,60 L87,135 L177,35 L217,75 L255,75 L255,195 L177,120 L87,210 L12,140Z" fill="#83BEEC" stroke="#106EBE" stroke-width="11" stroke-linejoin="round"/><path d="M5,0 V250 H257" fill="none" stroke="#3B3A39" stroke-width="13"/></g><g transform="translate(3155.09,506) scale(0.15916)"><rect x="47" y="32" width="65" height="163" fill="#83BEEC" stroke="#106EBE" stroke-width="11"/><rect x="50" y="195" width="59" height="50" fill="#FAFAFA" stroke="#3B3A39" stroke-width="11"/><rect x="162" y="32" width="63" height="76" fill="#C8C6C4" stroke="#8A8886" stroke-width="11"/><rect x="165" y="108" width="57" height="137" fill="#FAFAFA" stroke="#3B3A39" stroke-width="11"/><path d="M5,0 V250 H257" fill="none" stroke="#3B3A39" stroke-width="13"/><path d="M12,240 L92,132 L162,190 L249,105" fill="none" stroke="#3B3A39" stroke-width="12" stroke-linejoin="round"/></g><g transform="translate(3225.12,506) scale(0.15916)"><rect x="47" y="118" width="60" height="127" fill="#83BEEC" stroke="#106EBE" stroke-width="11"/><rect x="107" y="18" width="58" height="227" fill="#FAFAFA" stroke="#3B3A39" stroke-width="11"/><rect x="169" y="75" width="56" height="170" fill="#C8C6C4" stroke="#8A8886" stroke-width="11"/><path d="M5,0 V250 H257" fill="none" stroke="#3B3A39" stroke-width="13"/><path d="M12,240 L89,132 L162,195 L252,105" fill="none" stroke="#3B3A39" stroke-width="12" stroke-linejoin="round"/></g><g transform="translate(3295.15,506) scale(0.15916)"><path d="M27,40 Q127,105 242,30 V70 Q127,150 27,80Z" fill="#C8C6C4" stroke="#8A8886" stroke-width="9"/><rect x="30" y="160" width="210" height="40" fill="#FBDD9A" stroke="#D9730D" stroke-width="10"/><path d="M27,105 C70,105 90,200 130,200 C170,200 190,95 242,90 L242,138 C200,140 185,245 130,245 C80,245 70,150 27,152Z" fill="#83BEEC" stroke="#106EBE" stroke-width="11"/><path d="M100,160 Q130,142 160,160" fill="none" stroke="#D9730D" stroke-width="9"/><path d="M75,172 Q130,215 185,172" fill="none" stroke="#FBDD9A" stroke-width="10"/><path d="M7,0 V250 H257" fill="none" stroke="#3B3A39" stroke-width="13"/></g><g transform="translate(2945,566) scale(0.15916)"><rect x="32" y="75" width="55" height="170" fill="#FAFAFA" stroke="#3B3A39" stroke-width="11"/><rect x="100" y="77" width="40" height="75" fill="#7A7876"/><rect x="144" y="15" width="28" height="137" fill="#106EBE"/><rect x="182" y="20" width="55" height="225" fill="#FAFAFA" stroke="#3B3A39" stroke-width="11"/><path d="M210,20 V245" fill="none" stroke="#3B3A39" stroke-width="9"/><path d="M5,0 V251 H257" fill="none" stroke="#3B3A39" stroke-width="13"/></g><g transform="translate(3015.03,566) scale(0.15916)"><rect x="5" y="17" width="249" height="80" fill="#83BEEC" stroke="#106EBE" stroke-width="11"/><rect x="37" y="97" width="182" height="72" fill="#83BEEC" stroke="#106EBE" stroke-width="11"/><rect x="77" y="169" width="108" height="71" fill="#83BEEC" stroke="#106EBE" stroke-width="11"/></g><g transform="translate(3085.06,566) scale(0.15916)"><rect x="184" y="15" width="43" height="42" fill="#3B3A39"/><rect x="45" y="59" width="40" height="38" fill="#83BEEC"/><rect x="115" y="102" width="40" height="38" fill="#83BEEC"/><rect x="185" y="159" width="42" height="38" fill="#83BEEC"/><rect x="45" y="172" width="40" height="38" fill="#3B3A39"/><path d="M5,0 V251 H257" fill="none" stroke="#3B3A39" stroke-width="13"/></g><g transform="translate(3155.09,566) scale(0.15916)"><circle cx="127" cy="127" r="120" fill="#FAFAFA" stroke="#3B3A39" stroke-width="11"/><path d="M127,127 V7 A120,120 0 0 1 207,217Z" fill="#83BEEC" stroke="#106EBE" stroke-width="11" stroke-linejoin="round"/></g><g transform="translate(3225.12,566) scale(0.15916)"><path d="M5,127 A122,122 0 0 1 127,5 V72 A55,55 0 0 0 72,127Z" fill="#FAFAFA" stroke="#7A7876" stroke-width="10"/><path d="M127,5 A122,122 0 1 1 5,127 H72 A55,55 0 1 0 127,72Z" fill="#83BEEC" stroke="#106EBE" stroke-width="11"/></g><g transform="translate(3295.15,566) scale(0.15916)"><rect x="5" y="5" width="247" height="246" fill="#FAFAFA" stroke="#3B3A39" stroke-width="11"/><rect x="5" y="5" width="117" height="132" fill="#83BEEC" stroke="#106EBE" stroke-width="11"/><rect x="5" y="137" width="117" height="114" fill="#83BEEC" stroke="#106EBE" stroke-width="11"/><path d="M122,85 H252 M182,85 V251 M182,165 H252" fill="none" stroke="#3B3A39" stroke-width="10"/><rect x="5" y="5" width="247" height="246" fill="none" stroke="#3B3A39" stroke-width="11"/><rect x="5" y="5" width="117" height="246" fill="none" stroke="#106EBE" stroke-width="11"/></g><g transform="translate(2945,626) scale(0.15916)"><path d="M125,8 A106,106 0 1 0 225,185" fill="none" stroke="#3B3A39" stroke-width="10"/><circle cx="152" cy="115" r="72" fill="#fff" stroke="#3B3A39" stroke-width="9"/><ellipse cx="178" cy="75" rx="34" ry="24" fill="#2F9E55"/><ellipse cx="150" cy="160" rx="32" ry="28" fill="#2F9E55"/><ellipse cx="92" cy="125" rx="9" ry="26" fill="#2F9E55"/><path d="M47,248 H227 M137,225 V248" fill="none" stroke="#3B3A39" stroke-width="12"/></g><g transform="translate(3015.03,626) scale(0.15916)"><path d="M109,52 L165,52 L192,22 L252,22 L252,120 L122,120 L102,85Z" fill="#C8C6C4" stroke="#3B3A39" stroke-width="10" stroke-linejoin="round"/><path d="M5,135 L17,120 L137,120 L147,150 L117,200 L117,240 L87,220 L45,210 L37,185 L9,160Z" fill="#C8C6C4" stroke="#3B3A39" stroke-width="10" stroke-linejoin="round"/><path d="M5,18 L79,18 L109,52 L102,85 L122,120 L17,120 L32,60Z" fill="#83BEEC" stroke="#106EBE" stroke-width="10" stroke-linejoin="round"/><path d="M147,120 L252,120 L252,150 L232,190 L197,210 L165,210 L157,225 L117,235 L117,200 L147,150Z" fill="#83BEEC" stroke="#106EBE" stroke-width="10" stroke-linejoin="round"/></g><g transform="translate(3085.06,626) scale(0.15916)"><path d="M109,52 L165,52 L192,22 L252,22 L252,120 L122,120 L102,85Z" fill="#FAFAFA" stroke="#3B3A39" stroke-width="10" stroke-linejoin="round"/><path d="M5,135 L17,120 L137,120 L147,150 L117,200 L117,240 L87,220 L45,210 L37,185 L9,160Z" fill="#FAFAFA" stroke="#3B3A39" stroke-width="10" stroke-linejoin="round"/><path d="M5,18 L79,18 L109,52 L102,85 L122,120 L17,120 L32,60Z" fill="#FAFAFA" stroke="#2B88D8" stroke-width="10" stroke-linejoin="round"/><path d="M147,120 L252,120 L252,150 L232,190 L197,210 L165,210 L157,225 L117,235 L117,200 L147,150Z" fill="#FAFAFA" stroke="#2B88D8" stroke-width="10" stroke-linejoin="round"/></g><g transform="translate(3155.09,626) scale(0.15916)"><path d="M2,185 A125,125 0 0 1 72,72 L96,122 A70,70 0 0 0 57,185Z" fill="#FAFAFA" stroke="#3B3A39" stroke-width="11"/><path d="M72,72 A125,125 0 0 1 252,185 H197 A70,70 0 0 0 96,122Z" fill="#83BEEC" stroke="#106EBE" stroke-width="11"/><path d="M112,165 L190,110 L148,188 L122,192Z" fill="#3B3A39" stroke="#3B3A39" stroke-width="4" stroke-linejoin="round"/></g><g transform="translate(3225.12,626) scale(0.15916)"><rect x="5" y="32" width="247" height="193" fill="#FAFAFA" stroke="#3B3A39" stroke-width="11"/><text x="128" y="170" font-size="112" fill="#2B88D8" text-anchor="middle" textLength="185" lengthAdjust="spacingAndGlyphs">123</text><path d="M29,192 H225" fill="none" stroke="#8A8886" stroke-width="9"/></g><g transform="translate(3295.15,626) scale(0.15916)"><rect x="5" y="5" width="247" height="247" fill="#FAFAFA" stroke="#3B3A39" stroke-width="11"/><path d="M47,45 V210" fill="none" stroke="#8A8886" stroke-width="9"/><rect x="72" y="60" width="140" height="25" fill="#106EBE"/><rect x="72" y="145" width="140" height="25" fill="#106EBE"/><path d="M72,108 H142 M72,193 H142" fill="none" stroke="#8A8886" stroke-width="8"/></g><g transform="translate(2945,686) scale(0.15916)"><rect x="5" y="17" width="247" height="208" fill="#FAFAFA" stroke="#3B3A39" stroke-width="11"/><path d="M34,140 L80,64 L125,140Z" fill="#A8DDB5" stroke="#2F9E55" stroke-width="9" stroke-linejoin="round"/><path d="M134,62 L224,62 L179,135Z" fill="#F4A6AE" stroke="#D13438" stroke-width="9" stroke-linejoin="round"/><path d="M34,177 H224" fill="none" stroke="#8A8886" stroke-width="9"/></g><g transform="translate(3015.03,686) scale(0.15916)"><rect x="5" y="5" width="247" height="246" fill="#FAFAFA" stroke="#3B3A39" stroke-width="11"/><rect x="12" y="12" width="233" height="30" fill="#C8C6C4"/><rect x="49" y="92" width="46" height="43" fill="#C8C6C4" stroke="#8A8886" stroke-width="8"/><rect x="49" y="162" width="46" height="45" fill="#C8C6C4" stroke="#8A8886" stroke-width="8"/><path d="M132,132 L267,132 L267,162 L222,205 L222,262 L177,262 L177,205 L132,162Z" fill="#F3F2F1" stroke="#F3F2F1" stroke-width="30" stroke-linejoin="round"/><path d="M132,132 L267,132 L267,162 L222,205 L222,262 L177,262 L177,205 L132,162Z" fill="#FAFAFA" stroke="#3B3A39" stroke-width="11"/></g><g transform="translate(3085.06,686) scale(0.15916)"><rect x="5" y="5" width="247" height="246" fill="#FAFAFA" stroke="#3B3A39" stroke-width="11"/><rect x="12" y="12" width="233" height="30" fill="#C8C6C4"/><path d="M92,49 V245 M167,49 V245 M12,49 H245 M12,117 H245 M12,177 H245" fill="none" stroke="#7A7876" stroke-width="9"/><rect x="5" y="5" width="247" height="246" fill="none" stroke="#3B3A39" stroke-width="11"/></g><g transform="translate(3155.09,686) scale(0.15916)"><rect x="5" y="5" width="247" height="246" fill="#FAFAFA" stroke="#3B3A39" stroke-width="11"/><rect x="12" y="12" width="233" height="30" fill="#C8C6C4"/><rect x="167" y="54" width="78" height="191" fill="#83BEEC"/><rect x="12" y="177" width="233" height="68" fill="#83BEEC"/><path d="M92,49 V177 M12,49 H245 M12,117 H167" fill="none" stroke="#7A7876" stroke-width="9"/><path d="M167,54 V245 M12,177 H245 M167,117 H245 M87,177 V245" fill="none" stroke="#106EBE" stroke-width="10"/><rect x="5" y="5" width="247" height="246" fill="none" stroke="#3B3A39" stroke-width="11"/></g><g transform="translate(3225.12,686) scale(0.15916)"><text x="57" y="209" font-size="226" font-weight="700" fill="#1F86D0" textLength="122" lengthAdjust="spacingAndGlyphs">R</text></g><g transform="translate(3295.15,686) scale(0.15916)"><text x="-3" y="182" font-size="223" font-weight="700" fill="#1F86D0" textLength="256" lengthAdjust="spacingAndGlyphs">Py</text></g><g transform="translate(2945,746) scale(0.15916)"><path d="M12,52 H177" fill="none" stroke="#106EBE" stroke-width="9"/><circle cx="207" cy="50" r="30" fill="#83BEEC" stroke="#106EBE" stroke-width="10"/><path d="M12,122 H137 M12,180 H82" fill="none" stroke="#7A7876" stroke-width="9"/><circle cx="152" cy="122" r="16" fill="#C8C6C4" stroke="#7A7876" stroke-width="8"/><circle cx="95" cy="180" r="16" fill="#C8C6C4" stroke="#7A7876" stroke-width="8"/><path d="M5,0 V250 H257" fill="none" stroke="#3B3A39" stroke-width="13"/></g><g transform="translate(3015.03,746) scale(0.15916)"><path d="M97,121 H162 M135,33 V213 M135,33 H162 M135,213 H162" fill="none" stroke="#3B3A39" stroke-width="10"/><rect x="5" y="90" width="92" height="62" fill="#83BEEC" stroke="#106EBE" stroke-width="11"/><rect x="162" y="5" width="90" height="55" fill="#83BEEC" stroke="#106EBE" stroke-width="11"/><rect x="162" y="95" width="90" height="55" fill="#83BEEC" stroke="#106EBE" stroke-width="11"/><rect x="162" y="180" width="90" height="60" fill="#83BEEC" stroke="#106EBE" stroke-width="11"/></g><g transform="translate(3085.06,746) scale(0.15916)"><path d="M5,18 H252 V185 H107 L47,250 V185 H5Z" fill="#FAFAFA" stroke="#106EBE" stroke-width="11"/></g><g transform="translate(3155.09,746) scale(0.15916)"><path d="M29,5 H157 L225,72 V250 H29Z" fill="#FAFAFA"/><path d="M29,70 V5 H157 L225,72 V250 H29 V150" fill="none" stroke="#3B3A39" stroke-width="11"/><path d="M157,5 V72 H225" fill="none" stroke="#3B3A39" stroke-width="11"/><circle cx="42" cy="100" r="38" fill="#F3F2F1"/><circle cx="42" cy="100" r="23" fill="#83BEEC" stroke="#106EBE" stroke-width="9"/><path d="M102,122 H182 M72,163 H157" fill="none" stroke="#2B88D8" stroke-width="8"/></g><g transform="translate(3225.12,746) scale(0.15916)"><rect x="5" y="5" width="247" height="245" fill="#FAFAFA" stroke="#106EBE" stroke-width="12"/><path d="M110,30 L228,30 L228,105 L190,125 L170,150 L150,200 L110,228 L28,228 L28,150 L90,150 L100,90Z" fill="#83BEEC" stroke="#106EBE" stroke-width="8" stroke-linejoin="round"/><path d="M-13,10 a15,15 0 0 1 15,-15 h55 a15,15 0 0 1 15,15 v92 l-42,40 l-43,-40Z" fill="#D9730D"/><circle cx="29" cy="45" r="16" fill="#FAFAFA"/><circle cx="245" cy="148" r="36" fill="#F3F2F1"/><circle cx="245" cy="148" r="24" fill="#D9730D"/><circle cx="220" cy="220" r="50" fill="#F3F2F1"/><circle cx="220" cy="220" r="37" fill="#D9730D"/></g><g transform="translate(3295.15,746) scale(0.15916)"></g><g transform="translate(3280,735) scale(0.0484848)"><path d="M700,1015 L640,1085 L290,645 L640,205 L700,275 M805,205 L1175,645 L805,1085 L625,870 L805,645 L625,415Z M805,645 L985,430 M805,645 L985,855" fill="none" stroke="#3B3A39" stroke-width="50" stroke-linejoin="round" stroke-linecap="round"/></g><circle cx="2950.3" cy="822" r="2.6" fill="#201F1E"/><circle cx="2965.4" cy="822" r="2.6" fill="#201F1E"/><circle cx="2980.5" cy="822" r="2.6" fill="#201F1E"/><defs><filter id="bl" x="-20%" y="-20%" width="140%" height="140%"><feGaussianBlur stdDeviation="0.7"/></filter></defs><g transform="translate(2944,886.5)" filter="url(#bl)"><path d="M11,7 Q24,-1 39,9 Q33,15 24,13 Q16,13 11,7Z" fill="#4AAE92"/><path d="M43,21 Q48,32 40,44 Q35,37 37,30 Q38,25 43,21Z" fill="#F2913A"/><path d="M5,36 Q12,47 27,48 Q23,41 16,39 Q10,38 5,36Z" fill="#E55C3E"/><path d="M3,13 Q0,22 5,30 Q9,22 3,13Z" fill="#F3CF7A"/><path d="M20,11 L22,38 M27,11 L29,34 M24,12 L33,32 M10,22 Q24,26 36,30 M12,32 Q22,26 30,20" fill="none" stroke="#6B6A68" stroke-width="2"/></g><g transform="translate(2920,840) scale(0.216216)"><path d="M305,602 H490" fill="none" stroke="#252423" stroke-width="8"/><rect x="310" y="637" width="222" height="68" fill="none" stroke="#252423" stroke-width="9" stroke-dasharray="15 9"/><rect x="310" y="744" width="222" height="68" fill="none" stroke="#252423" stroke-width="9" stroke-dasharray="15 9"/><rect x="785" y="602" width="160" height="46" fill="none" stroke="#252423" stroke-width="10" rx="8"/><path d="M945,625 H985 V683 H877 V720" fill="none" stroke="#252423" stroke-width="10"/><rect x="852" y="720" width="50" height="102" fill="none" stroke="#252423" stroke-width="10" rx="4"/><circle cx="1327" cy="695" r="93" fill="none" stroke="#252423" stroke-width="10"/><path d="M1395,765 L1458,825" fill="none" stroke="#252423" stroke-width="12"/><path d="M1240,700 L1280,675 L1318,695 L1405,645" fill="none" stroke="#252423" stroke-width="9"/><path d="M1283,722 V772 M1318,722 V785 M1352,722 V780 M1388,700 V752" fill="none" stroke="#252423" stroke-width="9"/></g><g transform="translate(0,300) scale(0.253485)"><path d="M115,192 V322 H245" fill="none" stroke="#252423" stroke-width="9"/><rect x="138" y="215" width="20" height="83" fill="none" stroke="#252423" stroke-width="8"/><rect x="178" y="240" width="20" height="58" fill="none" stroke="#252423" stroke-width="8"/><rect x="218" y="205" width="20" height="93" fill="none" stroke="#252423" stroke-width="8"/><rect x="105" y="575" width="153" height="140" fill="none" stroke="#7A7876" stroke-width="8"/><path d="M105,600 H258 M155,600 V715 M207,600 V715 M105,640 H258 M105,678 H258" fill="none" stroke="#7A7876" stroke-width="7"/><rect x="95" y="1012" width="70" height="68" fill="none" stroke="#7A7876" stroke-width="8"/><rect x="195" y="960" width="73" height="68" fill="none" stroke="#7A7876" stroke-width="8"/><rect x="195" y="1060" width="73" height="70" fill="none" stroke="#7A7876" stroke-width="8"/><path d="M95,1035 H165 M195,983 H268 M195,1083 H268 M137,1012 V985 H195 M137,1080 V1108 H195" fill="none" stroke="#7A7876" stroke-width="7"/></g><g transform="translate(2100,305) scale(0.116455)"><path d="M445,262 H775 V290 L645,415 V548 H575 V415 L445,290Z" fill="none" stroke="#777" stroke-width="20"/><path d="M1205,275 H1070 V512 H1352 V420 M1070,430 H1200 V512 M1255,275 H1352 V375 M1352,275 L1240,387" fill="none" stroke="#777" stroke-width="20"/><circle cx="1682" cy="378" r="27" fill="#777"/><circle cx="1810" cy="378" r="27" fill="#777"/><circle cx="1940" cy="378" r="27" fill="#777"/></g><g transform="translate(3380,520) scale(0.253485)"><path d="M88,182 L140,235 L192,182" fill="none" stroke="#252423" stroke-width="8"/><rect x="232" y="155" width="120" height="110" fill="none" stroke="#252423" stroke-width="9"/><path d="M232,182 H352 M272,182 V265 M312,182 V265 M232,210 H352 M232,238 H352" fill="none" stroke="#252423" stroke-width="8"/><circle cx="358" cy="268" r="58" fill="#F2C811"/><path d="M335,268 L352,285 L385,250" fill="none" stroke="#201F1E" stroke-width="14"/><path d="M650,625 H560 L612,683 L560,745 H650" fill="none" stroke="#252423" stroke-width="8"/><path d="M408,690 L435,712 L480,665" fill="none" stroke="#252423" stroke-width="7"/><path d="M408,926.7 L435,948.7 L480,901.7" fill="none" stroke="#252423" stroke-width="7"/><path d="M408,1163.4 L435,1185.4 L480,1138.4" fill="none" stroke="#252423" stroke-width="7"/></g><circle cx="3435.2" cy="462.9" r="11.7" fill="none" stroke="#201F1E" stroke-width="2.5"/><path d="M3427,471.2 L3413.6,485.2" fill="none" stroke="#201F1E" stroke-width="2.5"/><path d="M3335,357 L3349,371 L3335,385 M3787.5,357 L3801.5,371 L3787.5,385 M2894,357 L2880,371 L2894,385" fill="none" stroke="#252423" stroke-width="2.6"/><path d="M2905.6,476.2 V503.7 L2892,493.1 H2880.5 V486.5 H2892Z" fill="none" stroke="#201F1E" stroke-width="2" stroke-linejoin="miter"/><path d="M3281.5,1138.6 L3295.6,1152.3 L3309.6,1138.6 M3326,1135.8 L3344.9,1154.2 M3344.9,1135.8 L3326,1154.2" fill="none" stroke="#252423" stroke-width="2"/><path d="M3281.5,1293.9 L3295.6,1307.6 L3309.6,1293.9 M3326,1291.1 L3344.9,1309.5 M3344.9,1291.1 L3326,1309.5" fill="none" stroke="#252423" stroke-width="2"/><path d="M3281.5,1447.8 L3295.6,1461.5 L3309.6,1447.8 M3326,1445 L3344.9,1463.4 M3344.9,1445 L3326,1463.4" fill="none" stroke="#252423" stroke-width="2"/><path d="M121,1881.4 V1902.2 L110.6,1891.8Z M166,1881.4 V1902.2 L177,1891.8Z" fill="#C8C6C4"/>
</svg>
<div class="t" style="left:51.0px;top:20.0px;font-size:34.2px;line-height:34.2px;color:#252423;transform:scaleX(0.9008);">File</div>
<div class="t" style="left:196.3px;top:20.0px;font-size:34.2px;line-height:34.2px;color:#252423;transform:scaleX(1.0338);-webkit-text-stroke:1.30px #252423;">Home</div>
<div class="t" style="left:369.4px;top:20.0px;font-size:34.2px;line-height:34.2px;color:#252423;transform:scaleX(0.9977);">Insert</div>
<div class="t" style="left:536.6px;top:20.0px;font-size:34.2px;line-height:34.2px;color:#252423;transform:scaleX(1.0378);">Modeling</div>
<div class="t" style="left:762.7px;top:20.0px;font-size:34.2px;line-height:34.2px;color:#252423;transform:scaleX(0.9697);">View</div>
<div class="t" style="left:915.0px;top:20.0px;font-size:34.2px;line-height:34.2px;color:#252423;transform:scaleX(0.9804);">Help</div>
<div class="t" style="left:1062.6px;top:20.0px;font-size:34.2px;line-height:34.2px;color:#806A16;transform:scaleX(1.0282);-webkit-text-stroke:1.10px #806A16;">Format</div>
<div class="t" style="left:1260.9px;top:20.0px;font-size:34.2px;line-height:34.2px;color:#806A16;transform:scaleX(1.0688);-webkit-text-stroke:1.10px #806A16;">Data / Drill</div>
<div class="t" style="left:29.8px;top:185.1px;font-size:26.9px;line-height:26.9px;color:#A19F9D;transform:scaleX(0.9763);">Paste</div>
<div class="t" style="left:173.9px;top:105.6px;font-size:26.9px;line-height:26.9px;color:#252423;transform:scaleX(1.0543);">Cut</div>
<div class="t" style="left:173.9px;top:165.2px;font-size:26.9px;line-height:26.9px;color:#252423;transform:scaleX(1.0683);">Copy</div>
<div class="t" style="left:173.9px;top:225.6px;font-size:26.9px;line-height:26.9px;color:#252423;transform:scaleX(1.1075);">Format painter</div>
<div class="t" style="left:442.0px;top:185.1px;font-size:26.9px;line-height:26.9px;color:#252423;transform:scaleX(1.0506);">Get</div>
<div class="t" style="left:421.6px;top:225.6px;font-size:26.9px;line-height:26.9px;color:#252423;transform:scaleX(1.0657);">data</div>
<div class="t" style="left:533.7px;top:185.1px;font-size:26.9px;line-height:26.9px;color:#252423;transform:scaleX(0.9518);">Excel</div>
<div class="t" style="left:621.9px;top:185.1px;font-size:26.9px;line-height:26.9px;color:#252423;transform:scaleX(1.0176);">Power BI</div>
<div class="t" style="left:627.3px;top:225.6px;font-size:26.9px;line-height:26.9px;color:#252423;transform:scaleX(1.0582);">datasets</div>
<div class="t" style="left:771.9px;top:185.1px;font-size:26.9px;line-height:26.9px;color:#252423;transform:scaleX(0.9610);">SQL</div>
<div class="t" style="left:757.0px;top:225.6px;font-size:26.9px;line-height:26.9px;color:#252423;transform:scaleX(1.0288);">Server</div>
<div class="t" style="left:865.3px;top:185.1px;font-size:26.9px;line-height:26.9px;color:#252423;transform:scaleX(1.0204);">Enter</div>
<div class="t" style="left:869.6px;top:225.6px;font-size:26.9px;line-height:26.9px;color:#252423;transform:scaleX(1.0561);">data</div>
<div class="t" style="left:954.0px;top:185.1px;font-size:26.9px;line-height:26.9px;color:#252423;transform:scaleX(1.0435);">Dataverse</div>
<div class="t" style="left:1114.3px;top:185.1px;font-size:26.9px;line-height:26.9px;color:#252423;transform:scaleX(1.0249);">Recent</div>
<div class="t" style="left:1094.4px;top:225.6px;font-size:26.9px;line-height:26.9px;color:#252423;transform:scaleX(1.0292);">sources</div>
<div class="t" style="left:1275.8px;top:185.1px;font-size:26.9px;line-height:26.9px;color:#252423;transform:scaleX(1.0626);">Transform</div>
<div class="t" style="left:1297.6px;top:225.6px;font-size:26.9px;line-height:26.9px;color:#252423;transform:scaleX(1.0619);">data</div>
<div class="t" style="left:1418.0px;top:185.1px;font-size:26.9px;line-height:26.9px;color:#252423;transform:scaleX(1.0037);">Refresh</div>
<div class="t" style="left:1582.6px;top:185.1px;font-size:26.9px;line-height:26.9px;color:#252423;transform:scaleX(1.0643);">New</div>
<div class="t" style="left:1575.0px;top:225.6px;font-size:26.9px;line-height:26.9px;color:#252423;transform:scaleX(1.0476);">visual</div>
<div class="t" style="left:1685.7px;top:185.1px;font-size:26.9px;line-height:26.9px;color:#252423;transform:scaleX(1.0312);">Text</div>
<div class="t" style="left:1688.0px;top:225.6px;font-size:26.9px;line-height:26.9px;color:#252423;transform:scaleX(1.0621);">box</div>
<div class="t" style="left:1791.0px;top:185.1px;font-size:26.9px;line-height:26.9px;color:#252423;transform:scaleX(1.1087);">More</div>
<div class="t" style="left:1767.0px;top:225.6px;font-size:26.9px;line-height:26.9px;color:#252423;transform:scaleX(1.0343);">visuals</div>
<div class="t" style="left:1962.5px;top:185.1px;font-size:26.9px;line-height:26.9px;color:#252423;transform:scaleX(1.0661);">New</div>
<div class="t" style="left:1936.0px;top:225.6px;font-size:26.9px;line-height:26.9px;color:#252423;transform:scaleX(1.0483);">measure</div>
<div class="t" style="left:2076.0px;top:185.1px;font-size:26.9px;line-height:26.9px;color:#252423;transform:scaleX(1.0746);">Quick</div>
<div class="t" style="left:2058.0px;top:225.6px;font-size:26.9px;line-height:26.9px;color:#252423;transform:scaleX(1.0512);">measure</div>
<div class="t" style="left:2231.0px;top:185.1px;font-size:26.9px;line-height:26.9px;color:#A19F9D;transform:scaleX(1.0863);">Sensitivity</div>
<div class="t" style="left:2222.6px;top:225.6px;font-size:26.9px;line-height:26.9px;color:#A19F9D;transform:scaleX(1.0619);">(preview)</div>
<div class="t" style="left:2425.0px;top:185.1px;font-size:26.9px;line-height:26.9px;color:#252423;transform:scaleX(1.0518);">Publish</div>
<div class="t" style="left:140.4px;top:283.0px;font-size:25.2px;line-height:25.2px;color:#323130;transform:scaleX(0.9744);">Clipboard</div>
<div class="t" style="left:797.0px;top:283.0px;font-size:25.2px;line-height:25.2px;color:#323130;transform:scaleX(0.9194);">Data</div>
<div class="t" style="left:1353.3px;top:283.0px;font-size:25.2px;line-height:25.2px;color:#323130;transform:scaleX(0.9320);">Queries</div>
<div class="t" style="left:1694.0px;top:283.0px;font-size:25.2px;line-height:25.2px;color:#323130;transform:scaleX(0.9683);">Insert</div>
<div class="t" style="left:1986.0px;top:283.0px;font-size:25.2px;line-height:25.2px;color:#323130;transform:scaleX(0.9547);">Calculations</div>
<div class="t" style="left:2242.0px;top:283.0px;font-size:25.2px;line-height:25.2px;color:#323130;transform:scaleX(0.9594);">Sensitivity</div>
<div class="t" style="left:2442.0px;top:283.0px;font-size:25.2px;line-height:25.2px;color:#323130;transform:scaleX(0.8858);">Share</div>
<div class="t" style="left:2961.7px;top:358.4px;font-size:39.1px;line-height:39.1px;color:#3B3A39;transform:scaleX(1.0310);-webkit-text-stroke:1.00px #3B3A39;">Visualizations</div>
<div class="t" style="left:3414.9px;top:358.2px;font-size:39.1px;line-height:39.1px;color:#3B3A39;transform:scaleX(0.9636);-webkit-text-stroke:1.00px #3B3A39;">Fields</div>
<div class="t" style="left:3466.3px;top:454.2px;font-size:34.2px;line-height:34.2px;color:#605E5C;transform:scaleX(0.9233);">Search</div>
<div class="t" style="left:3489.0px;top:559.8px;font-size:29.3px;line-height:29.3px;color:#252423;transform:scaleX(0.9109);">Table1</div>
<div class="t" style="left:2962.0px;top:1057.8px;font-size:29.3px;line-height:29.3px;color:#252423;transform:scaleX(0.9574);">From</div>
<div class="t" style="left:2961.5px;top:1212.9px;font-size:29.3px;line-height:29.3px;color:#252423;transform:scaleX(0.9090);">To</div>
<div class="t" style="left:2961.5px;top:1366.8px;font-size:29.3px;line-height:29.3px;color:#252423;transform:scaleX(0.9467);">Values</div>
<div class="t" style="left:2967.6px;top:1531.5px;font-size:39.1px;line-height:39.1px;color:#484644;transform:scaleX(1.0875);-webkit-text-stroke:1.40px #484644;">Drill through</div>
<div class="t" style="left:2954.0px;top:1618.4px;font-size:27.2px;line-height:27.2px;color:#252423;transform:scaleX(1.0841);">Cross-report</div>
<div class="t" style="left:2976.2px;top:1692.1px;font-size:27.2px;line-height:27.2px;color:#252423;transform:scaleX(1.1252);">Off</div>
<div class="t" style="left:2954.0px;top:1778.6px;font-size:27.2px;line-height:27.2px;color:#252423;transform:scaleX(1.0731);">Keep all filters</div>
<div class="t" style="left:2976.2px;top:1851.7px;font-size:27.2px;line-height:27.2px;color:#252423;transform:scaleX(1.0245);">On</div>
<div class="t" style="left:246.7px;top:1878.7px;font-size:29.3px;line-height:29.3px;color:#252423;transform:scaleX(0.9151);">Page 1</div>
<div class="t" style="left:7.0px;top:1953.2px;font-size:29.3px;line-height:29.3px;color:#484644;transform:scaleX(0.9595);">Page 1 of 1</div>
<div class="t" style="left:2907.2px;top:537.3px;font-size:40px;line-height:40px;color:#201F1E;-webkit-text-stroke:1.3px #201F1E;transform-origin:0 0;transform:rotate(90deg) scaleX(0.9678);">Filters</div>
<div class="t" style="left:745.5px;top:323.9px;font-size:33.0px;line-height:33.0px;color:#252423;transform:scaleX(0.9565);">by</div>
<div class="t" style="left:888.4px;top:323.9px;font-size:33.0px;line-height:33.0px;color:#252423;transform:scaleX(0.9780);">and</div>
<div class="t" style="left:607.9px;top:325.6px;font-size:31px;line-height:31px;color:#252423;transform:scaleX(0.9327);">تعداد افراد</div>
<div class="t" style="left:790.0px;top:325.6px;font-size:31px;line-height:31px;color:#252423;transform:scaleX(0.9295);">جنسیت</div>
<div class="t" style="left:955.0px;top:325.6px;font-size:31px;line-height:31px;color:#252423;transform:scaleX(0.9831);">واحد</div>
<div class="t" style="left:2962.0px;top:1131.5px;font-size:29px;line-height:29px;color:#252423;transform:scaleX(0.9822);">جنسیت</div>
<div class="t" style="left:2962.0px;top:1286.9px;font-size:29px;line-height:29px;color:#252423;transform:scaleX(0.9273);">واحد</div>
<div class="t" style="left:2962.0px;top:1440.7px;font-size:29px;line-height:29px;color:#252423;transform:scaleX(1.0123);">تعداد افراد</div>
<div class="t" style="left:3564.3px;top:619.5px;font-size:29px;line-height:29px;color:#252423;transform:scaleX(1.0086);">تاریخ</div>
<div class="t" style="left:3564.3px;top:679.5px;font-size:29px;line-height:29px;color:#252423;transform:scaleX(1.0091);">تعداد افراد</div>
<div class="t" style="left:3565.0px;top:739.5px;font-size:29px;line-height:29px;color:#252423;transform:scaleX(0.9722);">جنسیت</div>
<div class="t" style="left:3564.3px;top:799.5px;font-size:29px;line-height:29px;color:#252423;transform:scaleX(0.9345);">واحد</div>
<div class="t" style="left:2101.7px;top:547.8px;font-size:17.5px;line-height:17.5px;color:#777;transform:scaleX(1.1796);">کارخانه</div>
<div class="t" style="left:2102.7px;top:694.0px;font-size:17.5px;line-height:17.5px;color:#777;transform:scaleX(1.0060);">فروش</div>
<div class="t" style="left:2102.4px;top:959.8px;font-size:17.5px;line-height:17.5px;color:#777;transform:scaleX(1.2500);">توزیع</div>
<div class="t" style="left:2103.0px;top:1265.6px;font-size:17.5px;line-height:17.5px;color:#777;transform:scaleX(1.0667);">تامین</div>
<div class="t" style="left:2102.5px;top:1511.7px;font-size:17.5px;line-height:17.5px;color:#777;transform:scaleX(1.0749);">پرسنل خدمات</div>
<div class="t" style="left:2103.0px;top:1629.5px;font-size:17.5px;line-height:17.5px;color:#777;transform:scaleX(1.1824);">برنامه ریزی</div>
<div class="t" style="left:803.5px;top:1442.9px;font-size:17.5px;line-height:17.5px;color:#777;transform:scaleX(1.0273);">خانم</div>
<div class="t" style="left:821.2px;top:705.3px;font-size:17.5px;line-height:17.5px;color:#777;transform:scaleX(0.8474);">آقا</div>
<div class="b" style="left:1058.9px;top:767.9px;width:225.1px;height:124.1px;background:rgba(56,53,52,.97);"></div>
<div class="b" style="left:1042px;top:785px;width:0;height:0;border-top:17.5px solid transparent;border-bottom:17.5px solid transparent;border-right:17px solid rgba(56,53,52,.97);"></div>
<div class="t" style="left:1101.2px;top:817.5px;font-size:29px;line-height:29px;color:#C8C6C4;transform:scaleX(0.9742);">آقا</div>
<div class="t" style="left:1160.3px;top:817.5px;font-size:29.0px;line-height:29.0px;color:#F3F2F1;transform:scaleX(1.0146);font-weight:700;">62292</div>
</body></html>
